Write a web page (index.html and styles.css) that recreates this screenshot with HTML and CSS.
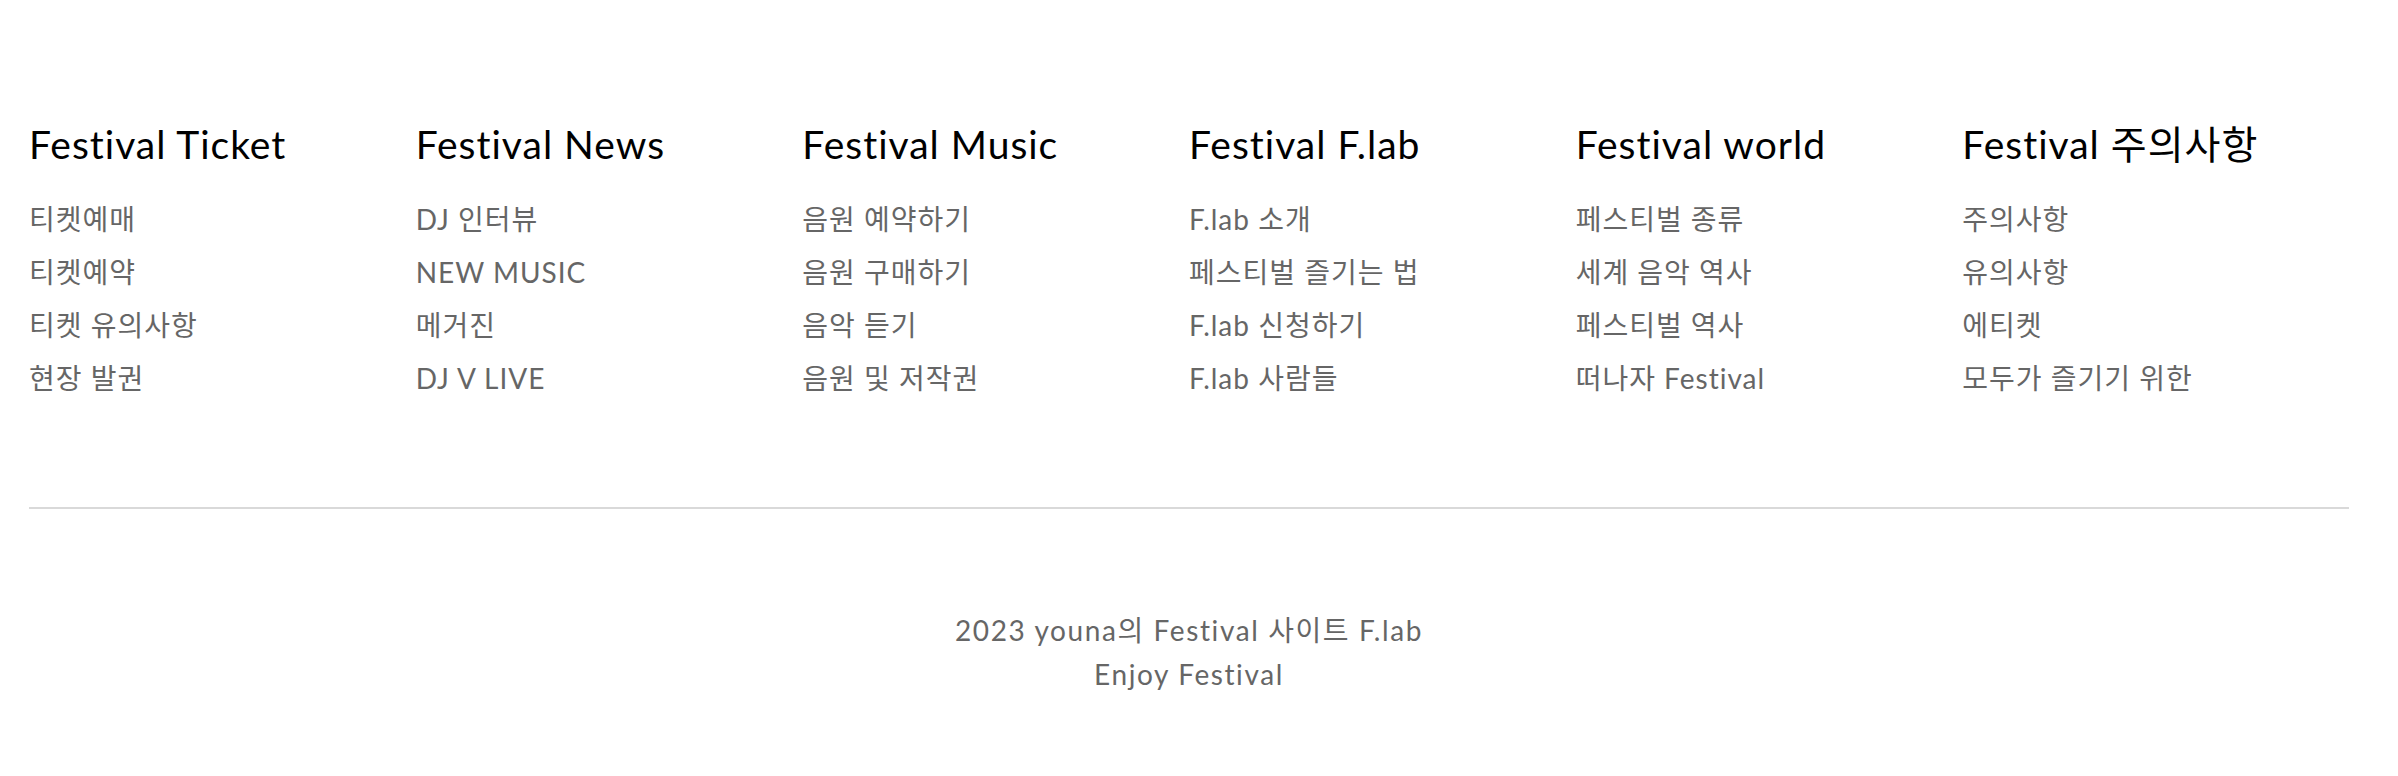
FILE: index.html
```html
<!DOCTYPE html>
<html lang="ko">
<head>
<meta charset="utf-8">
<title>Festival Footer</title>
<link rel="stylesheet" href="styles.css">
</head>
<body>
<footer class="footer">
  <nav class="menu">
    <section class="menu-col">
      <h3 class="menu-title">Festival Ticket</h3>
      <ul class="menu-list">
        <li>티켓예매</li>
        <li>티켓예약</li>
        <li>티켓 유의사항</li>
        <li>현장 발권</li>
      </ul>
    </section>
    <section class="menu-col">
      <h3 class="menu-title">Festival News</h3>
      <ul class="menu-list">
        <li>DJ 인터뷰</li>
        <li>NEW MUSIC</li>
        <li>메거진</li>
        <li>DJ V LIVE</li>
      </ul>
    </section>
    <section class="menu-col">
      <h3 class="menu-title">Festival Music</h3>
      <ul class="menu-list">
        <li>음원 예약하기</li>
        <li>음원 구매하기</li>
        <li>음악 듣기</li>
        <li>음원 및 저작권</li>
      </ul>
    </section>
    <section class="menu-col">
      <h3 class="menu-title">Festival F.lab</h3>
      <ul class="menu-list">
        <li>F.lab 소개</li>
        <li>페스티벌 즐기는 법</li>
        <li>F.lab 신청하기</li>
        <li>F.lab 사람들</li>
      </ul>
    </section>
    <section class="menu-col">
      <h3 class="menu-title">Festival world</h3>
      <ul class="menu-list">
        <li>페스티벌 종류</li>
        <li>세계 음악 역사</li>
        <li>페스티벌 역사</li>
        <li>떠나자 Festival</li>
      </ul>
    </section>
    <section class="menu-col">
      <h3 class="menu-title">Festival 주의사항</h3>
      <ul class="menu-list">
        <li>주의사항</li>
        <li>유의사항</li>
        <li>에티켓</li>
        <li>모두가 즐기기 위한</li>
      </ul>
    </section>
  </nav>
  <div class="copy">
    <p>2023 youna의 Festival 사이트 F.lab</p>
    <p>Enjoy Festival</p>
  </div>
</footer>
</body>
</html>
```
FILE: styles.css
```css
html, body {
  margin: 0;
  padding: 0;
  background: #ffffff;
}

body {
  font-family: Lato, "Noto Sans CJK KR", sans-serif;
  font-variant-ligatures: none;
}

.footer {
  padding: 0 49px 0 29px;
}

.menu {
  display: grid;
  grid-template-columns: repeat(6, 1fr);
  padding: 120px 0 111px;
  border-bottom: 2px solid #d9d9d9;
}

.menu-title {
  margin: 0 0 34px;
  font-size: 39px;
  line-height: 48px;
  font-weight: 400;
  letter-spacing: 1px;
  color: #000000;
  white-space: nowrap;
}

.menu-list {
  list-style: none;
  margin: 0;
  padding: 0;
  display: flex;
  flex-direction: column;
  gap: 18px;
}

.menu-list li {
  height: 35px;
  font-size: 28px;
  line-height: 35px;
  font-weight: 400;
  letter-spacing: 1px;
  color: #666666;
  white-space: nowrap;
}

.copy {
  padding-top: 99px;
  text-align: center;
}

.copy p {
  margin: 0;
  font-size: 28px;
  line-height: 44px;
  font-weight: 400;
  letter-spacing: 1.6px;
  color: #666666;
}
```
